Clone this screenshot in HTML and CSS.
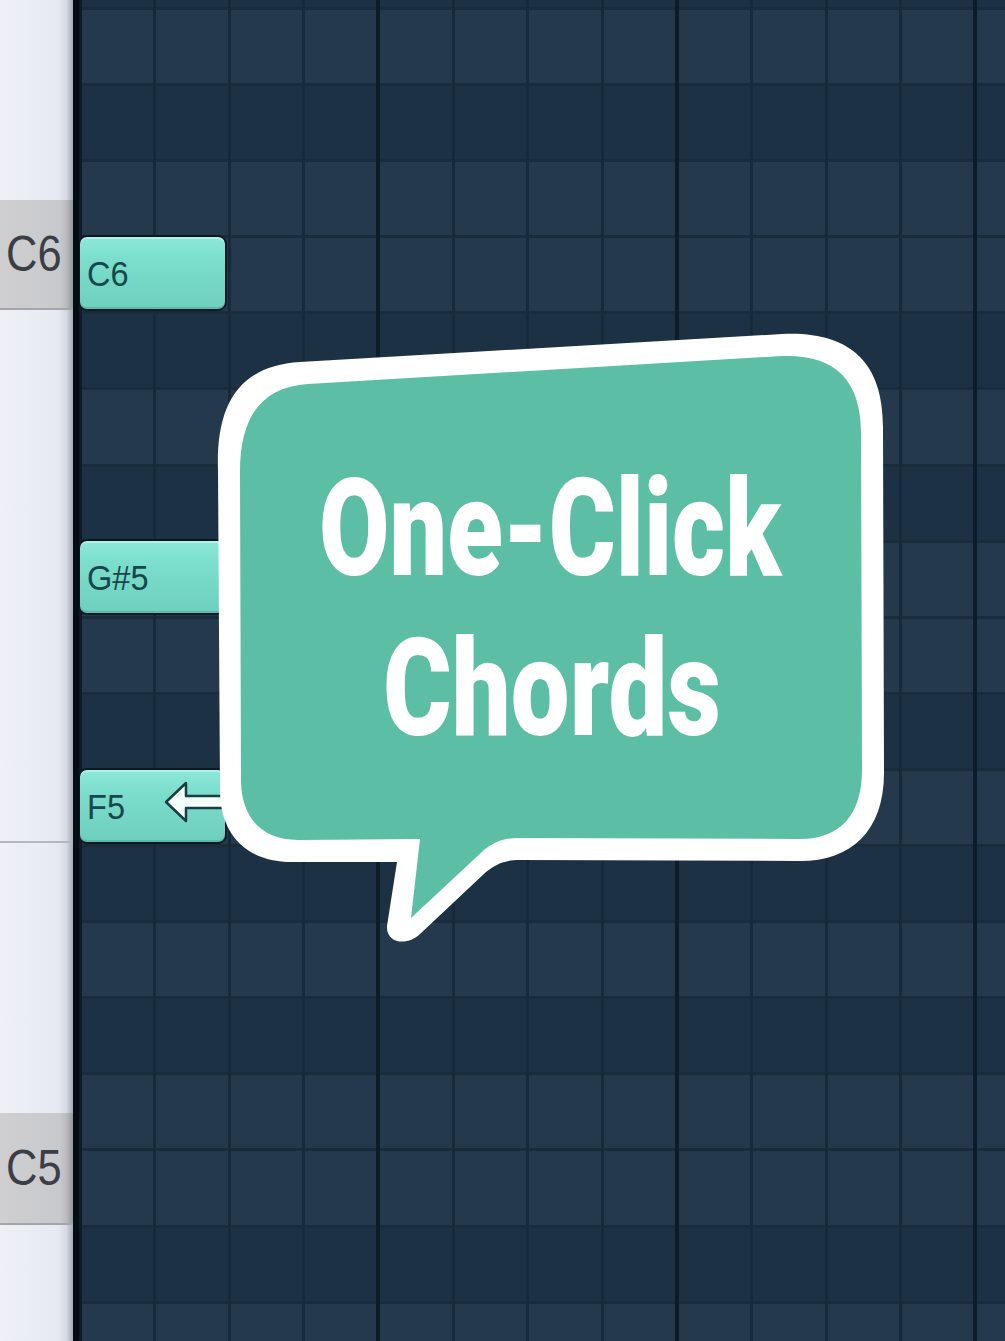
FILE: index.html
```html
<!DOCTYPE html>
<html lang="en">
<head>
<meta charset="utf-8">
<title>One-Click Chords</title>
<link rel="stylesheet" href="styles.css">
</head>
<body>
<div class="roll">
  <div class="keyboard">
    <div class="key k-top"></div>
    <div class="key key-c c6"><span>C6</span></div>
    <div class="key k-mid1"></div>
    <div class="key k-mid2"></div>
    <div class="key key-c c5"><span>C5</span></div>
    <div class="key k-bot"></div>
  </div>
  <div class="edge"></div>
  <div class="grid">
    <div class="rows">
      <div class="row first dark"></div>
      <div class="row"></div>
      <div class="row dark"></div>
      <div class="row"></div>
      <div class="row"></div>
      <div class="row dark"></div>
      <div class="row"></div>
      <div class="row dark"></div>
      <div class="row"></div>
      <div class="row"></div>
      <div class="row dark"></div>
      <div class="row"></div>
      <div class="row dark"></div>
      <div class="row"></div>
      <div class="row dark"></div>
      <div class="row"></div>
      <div class="row"></div>
      <div class="row dark"></div>
      <div class="row"></div>
    </div>
    <div class="note n-c6"><span>C6</span></div>
    <div class="note n-gs5"><span>G#5</span></div>
    <div class="note n-f5"><span>F5</span>
      <svg class="resize" viewBox="0 0 80 46" width="80" height="46">
        <polygon points="2,22 22,3 22,16 80,16 80,28 22,28 22,41" />
      </svg>
    </div>
  </div>
  <svg class="bubble" viewBox="0 0 1005 1341" width="1005" height="1341">
    <path class="outline" d="M218 470 C216 405 238 366 300 362 L782 334 C850 331 884 362 883 430 L884 770 C885 830 852 861 800 861 L520 860 C505 860 496 864 486 872 L420 934 C408 946 386 944 387 926 L397 862 L292 862 C246 862 220 834 220 790 Z"/>
    <path class="fill" d="M240 472 C240 416 262 387 308 384 L782 356 C835 354 862 380 861 436 L862 770 C862 815 840 839 800 839 L520 838 C503 838 494 842 484 850 L411 918 L420 839 L298 840 C262 840 242 818 241 782 Z"/>
    <text class="btext" x="550" y="575" text-anchor="middle" textLength="462" lengthAdjust="spacingAndGlyphs">One-Click</text>
    <text class="btext" x="552" y="735" text-anchor="middle" textLength="338" lengthAdjust="spacingAndGlyphs">Chords</text>
  </svg>
</div>
</body>
</html>
```
FILE: styles.css
```css
html, body {
  margin: 0;
  padding: 0;
  background: #1c3143;
}

.roll {
  position: relative;
  display: flex;
  width: 1005px;
  height: 1341px;
  overflow: hidden;
  font-family: "Liberation Sans", Arial, sans-serif;
}

/* keyboard */
.keyboard {
  width: 73px;
  flex: none;
  display: flex;
  flex-direction: column;
}

.key {
  flex: none;
  box-sizing: border-box;
  display: flex;
  align-items: center;
  background: linear-gradient(90deg, #eef0f6 0%, #e6e9f1 80%, #d6d9e1 91%, #a6aab2 100%);
}

.k-top { height: 200px; }
.k-mid1 { height: 533px; border-bottom: 2px solid #b3b6be; }
.k-mid2 { height: 270px; }
.k-bot { flex: 1; }

.key-c {
  background: linear-gradient(90deg, #cfcfd1 0%, #c8c9cc 82%, #b9bbc0 91%, #94979e 100%);
  border-bottom: 2px solid #a3a5aa;
}
.c6 { height: 110px; }
.c5 { height: 112px; }

.key-c span {
  display: inline-block;
  margin-left: 6px;
  font-size: 50px;
  line-height: 1;
  color: #3b3e45;
  transform: scaleX(0.87);
  transform-origin: left center;
}

.edge {
  width: 6px;
  flex: none;
  background: #070c12;
}

/* grid */
.grid {
  flex: 1;
  position: relative;
  overflow: hidden;
}

.grid::before {
  content: "";
  position: absolute;
  top: 0;
  bottom: 0;
  left: -71.7px;
  right: 0;
  background:
    repeating-linear-gradient(90deg, transparent 0 71.1px, #0d1c29 71.1px 75.1px, transparent 75.1px 298.4px),
    repeating-linear-gradient(90deg, transparent 0 71.6px, #172a3a 71.6px 74.6px);
  pointer-events: none;
}

.rows {
  display: flex;
  flex-direction: column;
}

.row {
  flex: none;
  height: 76.1px;
  box-sizing: border-box;
  background: #243a4c;
  border-top: 3px solid #192c3c;
}
.row.dark { background: #1c3143; }
.row.first { height: 7px; border-top: none; }

/* notes */
.note {
  position: absolute;
  z-index: 1;
  left: -1px;
  width: 149px;
  height: 76px;
  box-sizing: border-box;
  border: 2px solid #0a1826;
  border-radius: 9px;
  background: linear-gradient(180deg, #8ce9d9 0%, #7adccb 35%, #6ecfbe 100%);
  box-shadow: inset 0 2px 0 rgba(255, 255, 255, 0.35), inset 0 -2px 0 rgba(0, 60, 50, 0.15);
  display: flex;
  align-items: center;
  padding-left: 7px;
  color: #15484a;
  font-size: 35px;
}

.note span {
  display: inline-block;
  line-height: 1;
  transform: scaleX(0.93);
  transform-origin: left center;
}

.n-c6 { top: 235px; }
.n-gs5 { top: 539px; }
.n-f5 { top: 768px; }

.resize {
  position: absolute;
  left: 84px;
  top: 10px;
  overflow: visible;
}
.resize polygon {
  fill: #f2fffb;
  stroke: #1a3c45;
  stroke-width: 2.5;
  stroke-linejoin: round;
}

/* speech bubble */
.bubble {
  position: absolute;
  left: 0;
  top: 0;
  z-index: 2;
  pointer-events: none;
}
.bubble .outline { fill: #ffffff; }
.bubble .fill { fill: #5bbea5; }
.btext {
  font-family: Roboto, "DejaVu Sans", sans-serif;
  font-weight: 900;
  font-size: 136px;
  fill: #ffffff;
}
```
